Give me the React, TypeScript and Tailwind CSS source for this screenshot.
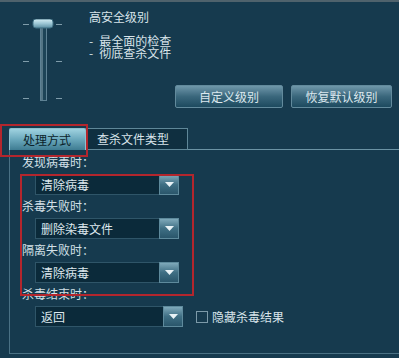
import React from "react";

const FONT = { fontFamily: '"Noto Sans CJK SC", "Noto Sans", sans-serif' };

function Arrow() {
  return (
    <svg width="9" height="5" viewBox="0 0 9 5">
      <path d="M0 0 H9 L4.5 5 Z" fill="#e8f2f6" />
    </svg>
  );
}

function Dropdown({ value, width }: { value: string; width: string }) {
  return (
    <div className={`flex h-[21px] ${width} ml-[13px]`}>
      <div className="flex-1 bg-[#0b2a3a] border border-[#2f5568] border-r-0 flex items-center pl-[5px] text-[12px] leading-[16px] text-[#dde8ee]">
        {value}
      </div>
      <div className="w-[20px] h-full flex items-center justify-center bg-gradient-to-b from-[#7fa9ba] via-[#3f6f84] to-[#2a566b] border border-[#5e8a9c]">
        <Arrow />
      </div>
    </div>
  );
}

function Label({ text }: { text: string }) {
  return <div className="h-[16px] text-[12px] leading-[16px] text-[#d3e0e7]">{text}</div>;
}

function Slider() {
  return (
    <svg width="40" height="84" viewBox="0 0 40 84">
      <defs>
        <linearGradient id="thumb" x1="0" y1="0" x2="0" y2="1">
          <stop offset="0" stopColor="#d6eef4" />
          <stop offset="0.5" stopColor="#9cc6d4" />
          <stop offset="1" stopColor="#5a8ea2" />
        </linearGradient>
      </defs>
      <g stroke="#7f9caa" strokeWidth="1">
        <line x1="0" y1="5.5" x2="6" y2="5.5" />
        <line x1="33" y1="5.5" x2="39" y2="5.5" />
        <line x1="0" y1="42.5" x2="6" y2="42.5" />
        <line x1="33" y1="42.5" x2="39" y2="42.5" />
        <line x1="0" y1="79.5" x2="6" y2="79.5" />
        <line x1="33" y1="79.5" x2="39" y2="79.5" />
      </g>
      <rect x="17.5" y="8.5" width="6" height="73" fill="#1d4457" stroke="#5e8294" />
      <rect x="18.5" y="9" width="1" height="72" fill="#8aa6b4" />
      <rect x="10" y="0" width="20" height="9" rx="3" fill="url(#thumb)" stroke="#3f6e82" />
    </svg>
  );
}

export default function App() {
  return (
    <div
      className="relative w-[399px] h-[358px] overflow-hidden bg-[#163a4e] border-t-2 border-[#4f626c]"
      style={FONT}
    >
      {/* top section */}
      <div className="flex h-[126px]">
        <div className="pl-[23px] pt-[17px]">
          <Slider />
        </div>
        <div className="flex-1 flex flex-col ml-[26px] pt-[9px]">
          <div className="text-[12px] leading-[12px] text-[#d8e4ea]">高安全级别</div>
          <div className="mt-[12px] h-[24px] text-[12px] leading-[12px] text-[#d8e4ea] whitespace-pre">
            {"-\u2002最全面的检查\n-\u2002彻底查杀文件"}
          </div>
          <div className="mt-[26px] flex justify-end gap-[8px] pr-[7px]">
            <button className="w-[108px] h-[23px] rounded-[2px] border border-[#628a9c] bg-gradient-to-b from-[#6f97aa] via-[#3a677c] to-[#1d4a5f] text-[12px] leading-[16px] text-[#dce8ee]">
              自定义级别
            </button>
            <button className="w-[101px] h-[23px] rounded-[2px] border border-[#628a9c] bg-gradient-to-b from-[#6f97aa] via-[#3a677c] to-[#1d4a5f] text-[12px] leading-[16px] text-[#dce8ee]">
              恢复默认级别
            </button>
          </div>
        </div>
      </div>

      {/* tabs */}
      <div className="flex h-[22px] pl-[9px] items-end">
        <div className="w-[77px] h-[22px] pl-[13px] flex items-center rounded-t-[2px] border border-b-0 border-[#8fc0cf] bg-gradient-to-b from-[#9fd2e0] via-[#6aa8bc] to-[#3e7c92] text-[12px] leading-[16px] text-[#0b1f2a]">
          处理方式
        </div>
        <div className="w-[102px] h-[22px] pl-[11px] flex items-center border-t border-r border-b border-t-[#5f8798] border-r-[#5f8798] border-b-[#5f8798] bg-[#0f2f40] text-[12px] leading-[16px] text-[#d8e4ea]">
          查杀文件类型
        </div>
        <div className="flex-1 h-full border-b border-[#6b93a4]" />
      </div>

      {/* panel */}
      <div className="ml-[9px] h-[204px] border-l border-b border-[#4a7184] pl-[12px] pt-[4px] flex flex-col">
        <Label text="发现病毒时：" />
        <div className="mt-[4px]">
          <Dropdown value="清除病毒" width="w-[144px]" />
        </div>
        <div className="mt-[3px]">
          <Label text="杀毒失败时：" />
        </div>
        <div className="mt-[4px]">
          <Dropdown value="删除染毒文件" width="w-[144px]" />
        </div>
        <div className="mt-[3px]">
          <Label text="隔离失败时：" />
        </div>
        <div className="mt-[4px]">
          <Dropdown value="清除病毒" width="w-[144px]" />
        </div>
        <div className="mt-[3px]">
          <Label text="杀毒结束时：" />
        </div>
        <div className="mt-[4px] flex items-center">
          <Dropdown value="返回" width="w-[148px]" />
          <div className="ml-[13px] w-[12px] h-[12px] border border-[#7c9aa9]" />
          <span className="ml-[4px] text-[12px] leading-[16px] text-[#d8e4ea]">隐藏杀毒结果</span>
        </div>
      </div>

      {/* annotation rectangles */}
      <div className="absolute left-0 top-[122px] w-[88px] h-[33px] border-2 border-[#b3262d] pointer-events-none" />
      <div className="absolute left-[20px] top-[172px] w-[174px] h-[122px] border-2 border-[#b3262d] pointer-events-none" />
    </div>
  );
}
